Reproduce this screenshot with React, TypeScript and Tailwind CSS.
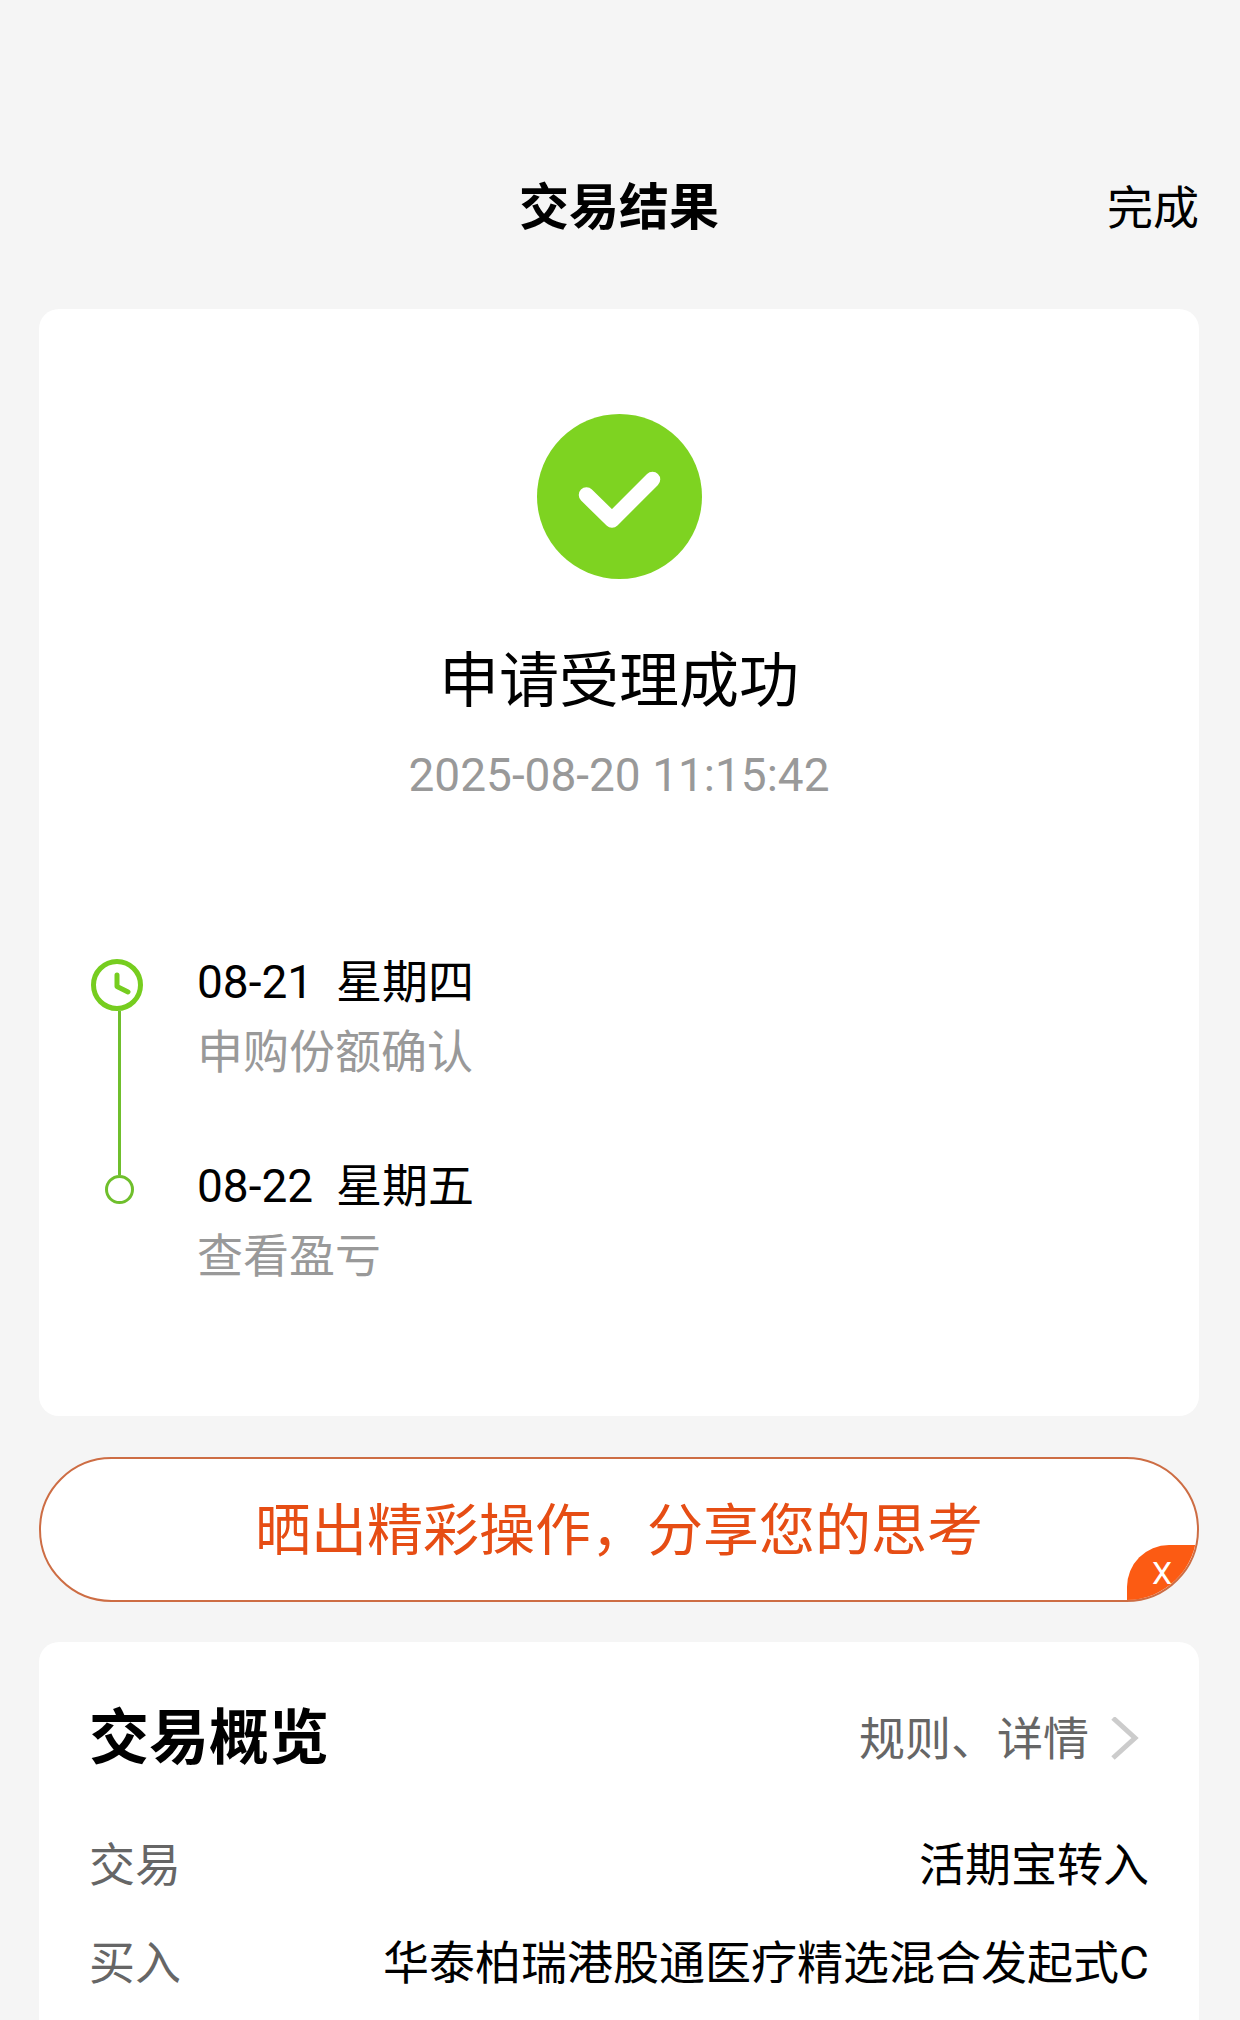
interface Step {
  date: string;
  weekday: string;
  label: string;
}

interface DetailRow {
  label: string;
  value: string;
}

const steps: Step[] = [
  { date: "08-21", weekday: "星期四", label: "申购份额确认" },
  { date: "08-22", weekday: "星期五", label: "查看盈亏" },
];

const details: DetailRow[] = [
  { label: "交易", value: "活期宝转入" },
  { label: "买入", value: "华泰柏瑞港股通医疗精选混合发起式C" },
];

function SuccessIcon() {
  return (
    <svg className="size-[165px]" viewBox="0 0 165 165" fill="none" aria-hidden="true">
      <circle cx="82.5" cy="82.5" r="82.5" fill="#7ed321" />
      <path
        d="M49.5 81 75 106 115.5 65.5"
        stroke="#fff"
        strokeWidth="15.5"
        strokeLinecap="round"
        strokeLinejoin="round"
      />
    </svg>
  );
}

function ClockIcon() {
  return (
    <svg className="size-[52px] self-start" viewBox="0 0 52 52" fill="none" stroke="#76cd1f" aria-hidden="true">
      <circle cx="26" cy="26" r="23.5" strokeWidth="5" />
      <path d="M26 16v11.5l11 5.5" strokeWidth="5" strokeLinecap="round" strokeLinejoin="round" />
    </svg>
  );
}

function ChevronIcon() {
  return (
    <svg className="h-11 w-7" viewBox="0 0 28 44" fill="none" stroke="#ccc" aria-hidden="true">
      <path d="M2 1 24 21 2 41" strokeWidth="5" />
    </svg>
  );
}

function Timeline() {
  return (
    <ol className="mt-[143px] text-[46px] leading-[68px]">
      {steps.map((step, index) => {
        const first = index === 0;
        return (
          <li key={step.date} className="flex gap-[49px]">
            <div className={`flex w-[57px] flex-col items-center ${first ? "pt-[11px]" : ""}`}>
              {first ? (
                <>
                  <ClockIcon />
                  <div className="w-[3px] flex-1 bg-[#6fbf2c]" />
                </>
              ) : (
                <>
                  <div className="h-[23px] w-[3px] bg-[#6fbf2c]" />
                  <div className="size-[29px] rounded-full border-3 border-[#6fbf2c]" />
                </>
              )}
            </div>
            <div className={first ? "pb-[66px]" : ""}>
              <p className="whitespace-pre">
                {step.date}
                {"  "}
                {step.weekday}
              </p>
              <p className="mt-0.5 text-[#999]">{step.label}</p>
            </div>
          </li>
        );
      })}
    </ol>
  );
}

function ShareBanner() {
  return (
    <div className="relative mt-[41px] h-[145px] shrink-0 overflow-hidden rounded-full border-2 border-[#cd6d44] bg-white">
      <button type="button" className="h-full w-full pt-0.5 text-[56px] text-[#e64d14]">
        晒出精彩操作，分享您的思考
      </button>
      <button
        type="button"
        aria-label="关闭"
        className="absolute right-0 bottom-0 flex h-[55px] w-[70px] items-center justify-center rounded-tl-[42px] bg-[#fc5b13] text-[32px] text-white"
      >
        X
      </button>
    </div>
  );
}

function Overview() {
  return (
    <section className="mt-10 flex-1 rounded-t-[20px] bg-white px-[50px] pt-[57px]">
      <div className="flex items-center justify-between leading-20">
        <h2 className="text-[60px] font-bold">交易概览</h2>
        <a href="#rules" className="flex items-center gap-[22px] pr-2.5 text-[46px] text-[#666]">
          规则、详情
          <ChevronIcon />
        </a>
      </div>
      <dl className="mt-[37px] text-[46px] leading-[98px]">
        {details.map((row) => (
          <div key={row.label} className="flex justify-between">
            <dt className="text-[#666]">{row.label}</dt>
            <dd>{row.value}</dd>
          </div>
        ))}
      </dl>
    </section>
  );
}

export default function App() {
  return (
    <main className="flex min-h-screen flex-col bg-[#f5f5f5] pr-[41px] pl-[39px] font-[Roboto,'Noto_Sans_CJK_SC',sans-serif] text-black">
      <header className="grid grid-cols-[1fr_auto_1fr] items-center pt-[172px] pb-[65px] leading-[72px]">
        <h1 className="col-start-2 text-[50px] font-bold">交易结果</h1>
        <button type="button" className="justify-self-end text-[46px]">
          完成
        </button>
      </header>

      <section className="rounded-[20px] bg-white px-[52px] pt-[105px] pb-[126px]">
        <div className="flex flex-col items-center">
          <SuccessIcon />
          <h2 className="mt-[63px] text-[60px] leading-20">申请受理成功</h2>
          <time dateTime="2025-08-20T11:15:42" className="mt-[23px] text-[46px] leading-[60px] text-[#999]">
            2025-08-20 11:15:42
          </time>
        </div>
        <Timeline />
      </section>

      <ShareBanner />
      <Overview />
    </main>
  );
}
